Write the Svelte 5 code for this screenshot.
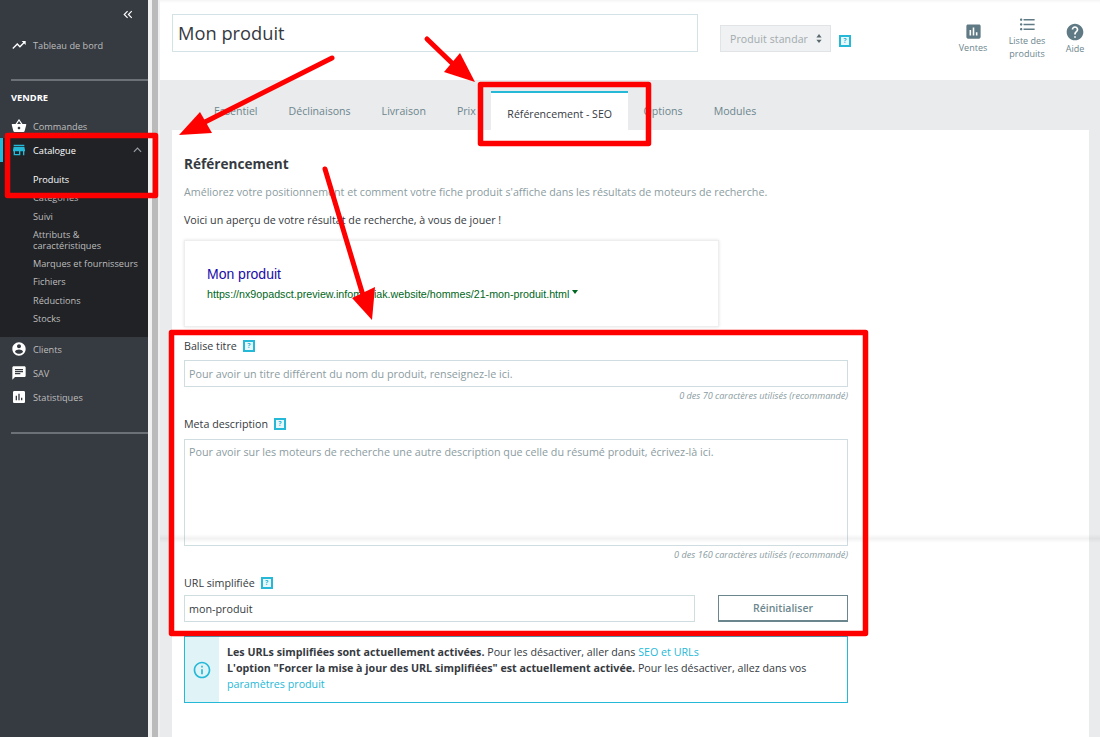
<script>
	const icons = {
		trend: 'M16 6l2.29 2.29-4.88 4.88-4-4L2 16.59 3.41 18l6-6 4 4 6.3-6.29L22 12V6z',
		basket: 'M17.21 9l-4.38-6.56c-.19-.28-.51-.42-.83-.42-.32 0-.64.14-.83.43L6.79 9H2c-.55 0-1 .45-1 1 0 .09.01.18.04.27l2.54 9.27c.23.84 1 1.46 1.92 1.46h13c.92 0 1.69-.62 1.93-1.46l2.54-9.27L23 10c0-.55-.45-1-1-1h-4.79zM9 9l3-4.4L15 9H9zm3 8c-1.1 0-2-.9-2-2s.9-2 2-2 2 .9 2 2-.9 2-2 2z',
		store: 'M20 4H4v2h16V4zm1 10v-2l-1-5H4l-1 5v2h1v6h10v-6h4v6h2v-6h1zm-9 4H6v-4h6v4z',
		user: 'M12 2C6.48 2 2 6.48 2 12s4.48 10 10 10 10-4.48 10-10S17.52 2 12 2zm0 3c1.66 0 3 1.34 3 3s-1.34 3-3 3-3-1.34-3-3 1.34-3 3-3zm0 14.2c-2.5 0-4.71-1.28-6-3.22.03-1.99 4-3.08 6-3.08 1.99 0 5.97 1.09 6 3.08-1.29 1.94-3.5 3.22-6 3.22z',
		chat: 'M20 2H4c-1.1 0-1.99.9-1.99 2L2 22l4-4h14c1.1 0 2-.9 2-2V4c0-1.1-.9-2-2-2zM6 9h12v2H6V9zm8 5H6v-2h8v2zm4-6H6V6h12v2z',
		stats: 'M19 3H5c-1.1 0-2 .9-2 2v14c0 1.1.9 2 2 2h14c1.1 0 2-.9 2-2V5c0-1.1-.9-2-2-2zM9 17H7v-7h2v7zm4 0h-2V7h2v10zm4 0h-2v-4h2v4z',
		list: 'M4 10.5c-.83 0-1.5.67-1.5 1.5s.67 1.5 1.5 1.5 1.5-.67 1.5-1.5-.67-1.5-1.5-1.5zm0-6c-.83 0-1.5.67-1.5 1.5S3.17 7.5 4 7.5 5.5 6.83 5.5 6 4.83 4.5 4 4.5zm0 12c-.83 0-1.5.68-1.5 1.5s.68 1.5 1.5 1.5 1.5-.68 1.5-1.5-.67-1.5-1.5-1.5zM7 19h14v-2H7v2zm0-6h14v-2H7v2zm0-8v2h14V5H7z',
		help: 'M12 2C6.48 2 2 6.48 2 12s4.48 10 10 10 10-4.48 10-10S17.52 2 12 2zm1 17h-2v-2h2v2zm2.07-7.75l-.9.92C13.45 12.9 13 13.5 13 15h-2v-.5c0-1.1.45-2.1 1.17-2.83l1.24-1.26c.37-.36.59-.86.59-1.41 0-1.1-.9-2-2-2s-2 .9-2 2H8c0-2.21 1.79-4 4-4s4 1.79 4 4c0 .88-.36 1.68-.93 2.25z',
		info: 'M11 17h2v-6h-2v6zm1-15C6.48 2 2 6.48 2 12s4.48 10 10 10 10-4.48 10-10S17.52 2 12 2zm0 18c-4.41 0-8-3.59-8-8s3.59-8 8-8 8 3.59 8 8-3.59 8-8 8zM11 9h2V7h-2v2z'
	};

	const subMenu = [
		'Produits',
		'Catégories',
		'Suivi',
		'Attributs & caractéristiques',
		'Marques et fournisseurs',
		'Fichiers',
		'Réductions',
		'Stocks'
	];
	const lowerMenu = [
		{ label: 'Clients', icon: icons.user },
		{ label: 'SAV', icon: icons.chat },
		{ label: 'Statistiques', icon: icons.stats }
	];
	const tabs = ['Essentiel', 'Déclinaisons', 'Livraison', 'Prix', 'Référencement - SEO', 'Options', 'Modules'];
	const activeTab = 'Référencement - SEO';
</script>

<div class="page">
	<aside class="sidebar">
		<div class="collapse">
			<svg viewBox="0 0 12 10" width="10" height="9" fill="none" stroke="#fff" stroke-width="1.4">
				<path d="M5.5 1 1.5 5l4 4M10.5 1l-4 4 4 4" />
			</svg>
		</div>
		<a class="row dashboard"><svg class="icon" viewBox="0 0 24 24"><path d={icons.trend} /></svg>Tableau de bord</a>
		<hr />
		<p class="section">VENDRE</p>
		<a class="row"><svg class="icon" viewBox="0 0 24 24"><path d={icons.basket} /></svg>Commandes</a>
		<div class="catalogue">
			<a class="row current">
				<svg class="icon blue" viewBox="0 0 24 24"><path d={icons.store} /></svg>Catalogue
				<svg class="chevron" viewBox="0 0 10 6" width="9" height="6" fill="none" stroke="#9aa0a6" stroke-width="1.3"><path d="M1 5l4-4 4 4" /></svg>
			</a>
			<ul>
				{#each subMenu as item, i}
					<li class:on={i === 0}>{item}</li>
				{/each}
			</ul>
		</div>
		{#each lowerMenu as item}
			<a class="row"><svg class="icon" viewBox="0 0 24 24"><path d={item.icon} /></svg>{item.label}</a>
		{/each}
		<hr class="last" />
	</aside>
	<div class="scrollbar"><span></span></div>

	<main>
		<header>
			<input class="title" value="Mon produit" />
			<div class="type">
				Produit standar
				<svg viewBox="0 0 8 12" width="6" height="9" fill="#5a6a70"><path d="M4 0 7.5 4.5h-7zM4 12 .5 7.5h7z" /></svg>
			</div>
			<span class="hint top-hint">?</span>
			<nav class="actions">
				<div><svg viewBox="0 0 24 24" width="19" height="19"><path d={icons.stats} /></svg>Ventes</div>
				<div class="list"><svg viewBox="0 0 24 24" width="19" height="19"><path d={icons.list} /></svg>Liste des produits</div>
				<div><svg viewBox="0 0 24 24" width="20" height="20"><path d={icons.help} /></svg>Aide</div>
			</nav>
		</header>

		<div class="tabs">
			{#each tabs as tab}
				<span class="tab" class:active={tab === activeTab}>{tab}</span>
			{/each}
		</div>

		<div class="body">
			<section class="card">
				<h2>Référencement</h2>
				<p class="lead">Améliorez votre positionnement et comment votre fiche produit s'affiche dans les résultats de moteurs de recherche.</p>
				<p class="intro">Voici un aperçu de votre résultat de recherche, à vous de jouer !</p>

				<div class="preview">
					<div class="preview-title">Mon produit</div>
					<div class="preview-url">https://nx9opadsct.preview.infomaniak.website/hommes/21-mon-produit.html<i></i></div>
				</div>

				<label class="label first">Balise titre <span class="hint">?</span></label>
				<input class="field" placeholder="Pour avoir un titre différent du nom du produit, renseignez-le ici." />
				<small>0 des 70 caractères utilisés (recommandé)</small>

				<label class="label">Meta description <span class="hint">?</span></label>
				<textarea class="field area" placeholder="Pour avoir sur les moteurs de recherche une autre description que celle du résumé produit, écrivez-là ici."></textarea>
				<small>0 des 160 caractères utilisés (recommandé)</small>

				<label class="label">URL simplifiée <span class="hint">?</span></label>
				<div class="url-row">
					<input class="field" value="mon-produit" />
					<button type="button">Réinitialiser</button>
				</div>

				<div class="alert">
					<div class="alert-icon">
						<svg viewBox="0 0 24 24" width="20" height="20"><path d={icons.info} /></svg>
					</div>
					<p>
						<b>Les URLs simplifiées sont actuellement activées.</b> Pour les désactiver, aller dans <a>SEO et URLs</a><br />
						<b>L'option "Forcer la mise à jour des URL simplifiées" est actuellement activée.</b> Pour les désactiver, allez dans vos <a>paramètres produit</a>
					</p>
				</div>
			</section>
		</div>
	</main>

	<!-- faint stitching seam of the original capture -->
	<div class="seam"></div>

	<!-- hand-drawn annotations on top of the page -->
	<svg class="marks" viewBox="0 0 1100 737" width="1100" height="737">
		<g fill="none" stroke="#f00" stroke-width="5.5" stroke-linejoin="round">
			<rect x="7.5" y="135.5" width="148" height="60" />
			<rect x="480.5" y="84.5" width="168" height="59" />
			<rect x="171.5" y="332.5" width="694" height="301" />
		</g>
		<g stroke="#f00" stroke-width="5" stroke-linecap="round">
			<path d="M332 58 205 122" />
			<path d="M427 39 455 66" />
			<path d="M325 169 362 292" />
		</g>
		<g fill="#f00">
			<path d="M179 135 200 112 212 133z" />
			<path d="M475 82 460 53 444 72z" />
			<path d="M372 320 352 298 375 287z" />
		</g>
	</svg>
</div>

<style>
	:global(body) {
		font-family: 'Open Sans', sans-serif;
		background: #fff;
	}

	.page {
		position: relative;
		display: flex;
		width: 1100px;
		height: 737px;
		overflow: hidden;
		color: #363a41;
	}

	.sidebar {
		flex: 0 0 148px;
		background: #363a41;
		color: #bebebe;
		font-size: 9.2px;
	}

	.collapse {
		display: flex;
		justify-content: flex-end;
		align-items: center;
		height: 28px;
		padding-right: 15px;
	}

	.row {
		display: flex;
		align-items: center;
		height: 24px;
		padding-left: 33px;
		position: relative;
	}

	.dashboard {
		margin-top: 5px;
	}

	.icon {
		position: absolute;
		left: 11px;
		top: 4px;
		width: 16px;
		height: 16px;
		fill: #fff;
	}

	.icon.blue {
		fill: #25b9d7;
	}

	hr {
		height: 2px;
		margin: 22px 0 0 11px;
		border: 0;
		background: #6c7177;
	}

	hr.last {
		margin-top: 23px;
	}

	.section {
		height: 33px;
		margin: 0;
		padding: 10px 0 0 11px;
		box-sizing: border-box;
		color: #fff;
		font-size: 9.3px;
		font-weight: 700;
		line-height: 14px;
	}

	.catalogue {
		height: 199px;
		background: #202226;
	}

	.current {
		color: #fff;
		box-shadow: inset 3px 0 0 #25b9d7;
	}

	.chevron {
		position: absolute;
		right: 6px;
		top: 9px;
	}

	.catalogue ul {
		margin: 11px 0 0;
		padding: 0;
		list-style: none;
	}

	.catalogue li {
		padding: 2px 8px 2px 33px;
		line-height: 10.5px;
		margin-bottom: 3.9px;
	}

	.catalogue li.on {
		color: #fff;
	}

	.scrollbar {
		flex: 0 0 12px;
		padding-left: 4px;
		box-sizing: border-box;
		background: #f1f1f1;
	}

	.scrollbar span {
		display: block;
		width: 6px;
		height: 100%;
		background: #bbb;
	}

	main {
		flex: 1;
		min-width: 0;
		display: flex;
		flex-direction: column;
	}

	header {
		position: relative;
		display: flex;
		align-items: flex-start;
		height: 80px;
		padding: 14px 0 0 12px;
		box-sizing: border-box;
		background: #fff;
		box-shadow: inset 0 3px 3px -2px rgba(0, 0, 0, 0.06);
	}

	.title {
		width: 526px;
		height: 38px;
		padding: 0 5px 2px;
		box-sizing: border-box;
		border: 1.5px solid #d3e2e6;
		font: 18.3px 'Open Sans', sans-serif;
		color: #363a41;
		outline: none;
	}

	.type {
		display: flex;
		align-items: center;
		gap: 8px;
		width: 111px;
		height: 27px;
		margin: 11px 0 0 22px;
		padding-left: 9px;
		box-sizing: border-box;
		border: 1px solid #e0e4e6;
		background: #eff1f2;
		color: #a2aaae;
		font-size: 10.5px;
		letter-spacing: 0.1px;
	}

	.hint {
		display: block;
		flex: none;
		width: 12px;
		height: 12px;
		box-sizing: border-box;
		border: 2px solid #25b9d7;
		background: #eaf8fb;
		color: #25b9d7;
		font-size: 7px;
		font-weight: 700;
		line-height: 8px;
		text-align: center;
	}

	.top-hint {
		margin: 21px 0 0 8px;
	}

	.actions {
		position: absolute;
		top: 22px;
		right: 7px;
		display: flex;
		gap: 8px;
		color: #6c868e;
		font-size: 9px;
		line-height: 13px;
		text-align: center;
	}

	.actions div {
		display: flex;
		flex-direction: column;
		align-items: center;
		width: 36px;
	}

	.actions div.list {
		width: 44px;
		margin: -7px 0 0 6px;
	}

	.actions svg {
		fill: #5f7a84;
	}

	.tabs {
		display: flex;
		align-items: flex-end;
		height: 50px;
		padding-left: 38.5px;
		box-sizing: border-box;
		background: #eaebec;
		color: #6c868e;
		font-size: 10.6px;
	}

	.tab {
		height: 39px;
		padding: 12px 15.5px 0;
		box-sizing: border-box;
		line-height: 16px;
	}

	.tab.active {
		padding: 13px 16px 0;
		border-top: 2px solid #25b9d7;
		background: #fff;
		color: #363a41;
	}

	.body {
		flex: 1;
		padding: 0 11px 0 12px;
		background: #eaebec;
	}

	.card {
		height: 100%;
		padding: 25px 12px 0;
		box-sizing: border-box;
		background: #fff;
		display: flex;
		flex-direction: column;
		align-items: flex-start;
		font-size: 10.7px;
	}

	h2 {
		margin: 0;
		font-size: 13.6px;
		line-height: 18px;
		font-weight: 700;
		color: #363a41;
	}

	.lead {
		margin: 11px 0 0;
		line-height: 16px;
		color: #8b9ca1;
	}

	.intro {
		margin: 12px 0 0;
		line-height: 16px;
		color: #363a41;
	}

	.preview {
		width: 535px;
		height: 87px;
		margin-top: 12px;
		padding: 25px 22px 0;
		box-sizing: border-box;
		border: 1px solid #eee;
		box-shadow: 0 0 3px rgba(0, 0, 0, 0.12);
		font-family: 'Liberation Sans', Arial, sans-serif;
	}

	.preview-title {
		color: #1a0dab;
		font-size: 14px;
		line-height: 17px;
	}

	.preview-url {
		margin-top: 4px;
		color: #006621;
		font-size: 10.7px;
		line-height: 14px;
		white-space: nowrap;
	}

	.preview-url i {
		display: inline-block;
		margin: 0 0 4px 3px;
		border: 3.5px solid transparent;
		border-top: 4px solid #006621;
		border-bottom: 0;
	}

	.label {
		display: flex;
		align-items: center;
		gap: 6px;
		height: 14px;
		margin-top: 15px;
		line-height: 14px;
		color: #363a41;
	}

	.label.first {
		margin-top: 12px;
	}

	.field {
		display: block;
		width: 664px;
		height: 27px;
		margin-top: 7px;
		padding: 0 4px;
		box-sizing: border-box;
		border: 1px solid #cfdde1;
		background: #fff;
		font: 10.75px 'Open Sans', sans-serif;
		color: #363a41;
		outline: none;
	}

	.field::placeholder {
		color: #8b9ca1;
		opacity: 1;
	}

	.area {
		height: 107px;
		margin-top: 8px;
		padding: 5px 4px;
		resize: none;
	}

	small {
		width: 664px;
		margin: 3px 0 0;
		text-align: right;
		color: #8b9ca1;
		font-size: 9.15px;
		font-style: italic;
		line-height: 12px;
	}

	.url-row {
		display: flex;
		justify-content: space-between;
		width: 664px;
		margin-top: 5px;
	}

	.url-row .field {
		width: 511px;
		margin: 0;
	}

	button {
		width: 130px;
		height: 27px;
		padding: 0;
		border: 1px solid #6c868e;
		border-bottom-width: 2px;
		background: #fff;
		color: #6c868e;
		font: 600 10.5px 'Open Sans', sans-serif;
	}

	.alert {
		display: flex;
		width: 664px;
		height: 67px;
		margin-top: 14px;
		box-sizing: border-box;
		border: 1.5px solid #25b9d7;
		color: #363a41;
	}

	.alert-icon {
		display: flex;
		align-items: center;
		justify-content: center;
		flex: 0 0 34px;
		background: #e0f4f8;
	}

	.alert-icon svg {
		fill: #25b9d7;
	}

	.alert p {
		margin: 6.5px 0 0 8px;
		line-height: 16px;
	}

	.alert a {
		color: #25b9d7;
	}

	.seam {
		position: absolute;
		left: 160px;
		right: 0;
		top: 534px;
		height: 9px;
		background: linear-gradient(rgba(0, 0, 0, 0), rgba(0, 0, 0, 0.05) 50%, rgba(0, 0, 0, 0));
		pointer-events: none;
	}

	.marks {
		position: absolute;
		left: 0;
		top: 0;
		pointer-events: none;
	}
</style>
